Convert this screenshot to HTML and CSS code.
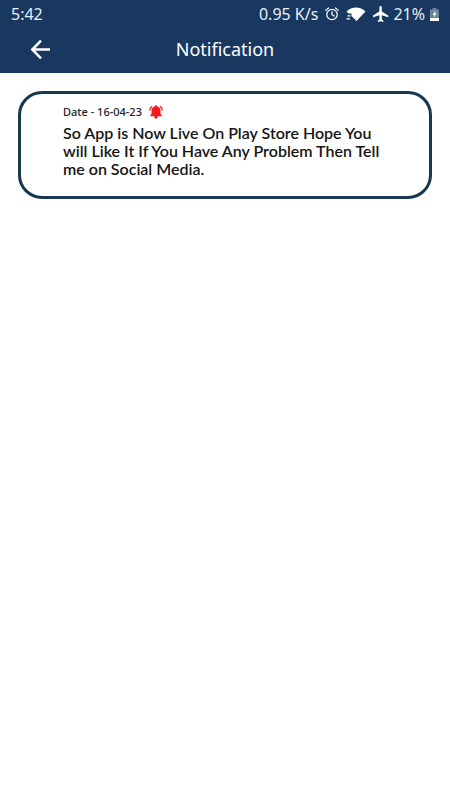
FILE: index.html
```html
<!DOCTYPE html>
<html lang="en">
<head>
  <meta charset="UTF-8">
  <meta name="viewport" content="width=device-width, initial-scale=1.0">
  <title>Notification</title>
  <link rel="stylesheet" href="styles.css">
</head>
<body>
  <header class="top">
    <div class="status-bar">
      <span class="clock">5:42</span>
      <div class="status-right">
        <span class="speed">0.95 K/s</span>
        <svg class="alarm" width="14" height="14" viewBox="0 0 14 14" fill="none" stroke="currentColor" stroke-linecap="round">
          <circle cx="7" cy="7.5" r="5.2" stroke-width="1.2"/>
          <path d="M7 4.5v3.2l2.2 1.4M.8 3.4 3.5 1M13.2 3.4 10.5 1" stroke-width="1.2"/>
        </svg>
        <svg class="wifi" width="20" height="14" viewBox="0 0 20 14" fill="currentColor">
          <path d="M.5 4.500C5.500-1 14.500-1 19.500 4.500L10.500 14 5.500 9V6.500H2.500Z"/>
          <path d="M1.500 8.300H4.500V9.500H1.500ZM.5 11.200H4V12.400H.5Z"/>
        </svg>
        <svg class="plane" width="16" height="16" viewBox="2 2 20 20" fill="currentColor">
          <path d="M21 16v-2l-8-5V3.500a1.500 1.500 0 0 0-3 0V9l-8 5v2l8-2.500V19l-2 1.500V22l3.500-1 3.500 1v-1.500L13 19v-5.500z"/>
        </svg>
        <span class="percent">21%</span>
        <svg class="battery" width="9" height="13" viewBox="0 0 9 13">
          <path d="M2.500 0h4v1.500H9V13H0V1.500h2.500z" fill="#6d829c"/>
          <path d="M0 10h9v3H0z" fill="#fff"/>
          <path d="M5.500 2.500 2.500 6.700h1.800L3.700 9.500l3-4H5z" fill="#fff"/>
        </svg>
      </div>
    </div>
    <div class="app-bar">
      <button class="back" type="button" aria-label="Back">
        <svg width="20" height="20" viewBox="0 0 20 20" fill="none" stroke="currentColor" stroke-width="2.500">
          <path d="M20 10.500H2.500M11 1.700 2.300 10.500l8.700 8.800"/>
        </svg>
      </button>
      <h1 class="title">Notification</h1>
    </div>
  </header>

  <main class="content">
    <article class="card">
      <div class="card-date">
        <span>Date - 16-04-23</span>
        <svg width="14" height="14" viewBox="0 0 14 14" fill="#f5191d">
          <path d="M7 .3c.7 0 1.100.5 1.100 1.100C10.500 1.900 11.500 3.500 11.500 5.500v3.300l1.300 1.600v.8H1.200v-.8L2.500 8.800V5.500c0-2 1-3.600 3.400-4.100C5.900.8 6.300.3 7 .3ZM5.300 11h3.400c0 1.800-.6 2.700-1.700 2.700S5.300 12.800 5.300 11Z"/>
          <path d="M3 1.200C1.600 2.300.8 3.700.7 5.500M11 1.200c1.400 1.100 2.200 2.500 2.300 4.300" fill="none" stroke="#f5191d" stroke-width="1.300"/>
        </svg>
      </div>
      <p class="card-text">So App is Now Live On Play Store Hope You will Like It If You Have Any Problem Then Tell me on Social Media.</p>
    </article>
  </main>
</body>
</html>
```
FILE: styles.css
```css
* {
  margin: 0;
  padding: 0;
  box-sizing: border-box;
}

body {
  background-color: #fff;
  font-family: "Noto Sans", sans-serif;
}

.top {
  background-color: #183860;
  color: #fff;
}

.status-bar {
  display: flex;
  justify-content: space-between;
  align-items: center;
  height: 28px;
  padding: 0 11px;
  font-size: 16px;
  color: #e8eef6;
}

.status-right {
  display: flex;
  align-items: center;
  gap: 7px;
}

.status-right svg {
  color: #fff;
}

.percent {
  margin-left: -3px;
}

.battery {
  margin-left: -2px;
}

.app-bar {
  display: grid;
  grid-template-columns: 40px 1fr 40px;
  align-items: center;
  height: 45px;
  padding: 0 20px 3px;
}

.back {
  display: flex;
  justify-content: center;
  background: none;
  border: none;
  color: #fff;
  cursor: pointer;
}

.title {
  text-align: center;
  font-size: 18px;
  font-weight: 400;
}

.content {
  padding: 18px;
}

.card {
  min-height: 108px;
  padding: 11px 42px 18px 42px;
  border: 3px solid #17384f;
  border-radius: 24px;
}

.card-date {
  display: flex;
  align-items: center;
  gap: 7px;
  font-size: 11px;
  font-weight: 500;
  line-height: 14px;
  color: #222;
}

.card-text {
  margin-top: 5px;
  font-family: Lato, "Noto Sans", sans-serif;
  font-size: 16px;
  font-weight: 600;
  line-height: 18px;
  color: #151515;
}
```
